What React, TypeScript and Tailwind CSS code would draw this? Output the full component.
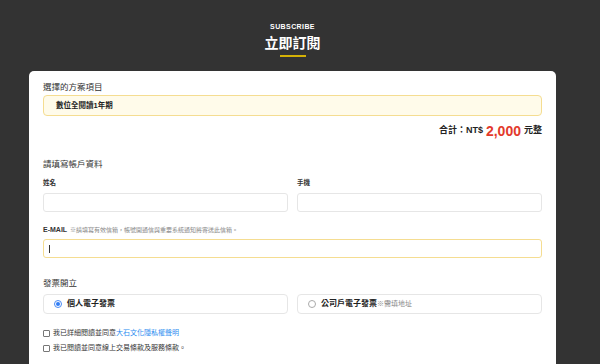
import React from "react";

const font = { fontFamily: '"Liberation Sans", "Noto Sans CJK TC", "Noto Sans", sans-serif' };

export default function App() {
  return (
    <div className="min-h-screen w-[600px] bg-[#333333]" style={font}>
      <div className="ml-[29px] w-[527px]">
        <div className="flex flex-col items-center pt-[22px]">
          <div className="h-[10px] leading-[10px] text-[7px] font-bold tracking-[0.4px] text-white">SUBSCRIBE</div>
          <div className="mt-[2px] h-[19px] leading-[19px] text-[14px] font-bold text-white">立即訂閱</div>
          <div className="mt-[2px] h-[2px] w-[26px] bg-[#d4b106]" />
        </div>
        <div className="mt-[14px] rounded-t-[5px] bg-white px-[14px] pt-[10px] pb-[20px] text-[#222]">
          <div className="h-[12px] leading-[12px] text-[8.5px] text-[#333]">選擇的方案項目</div>
          <div className="mt-[2px] flex h-[21px] items-center rounded-[4px] border border-[#f5dd91] bg-[#fffbea] pl-[12px] text-[7.5px] font-bold text-[#222]">
            數位全閱讀1年期
          </div>
          <div className="mt-[7px] flex h-[16px] items-center justify-end text-[9px] font-bold text-[#222]">
            <span>合計：NT$</span>
            <span className="ml-[3px] text-[14px] text-[#e3392b]">2,000</span>
            <span className="ml-[3px] text-[9px]">元整</span>
          </div>
          <div className="mt-[19px] h-[12px] leading-[12px] text-[8.5px] text-[#333]">請填寫帳戶資料</div>
          <div className="mt-[8px] grid grid-cols-2 gap-x-[9px]">
            <div className="h-[10px] leading-[10px] text-[6.5px] font-bold text-[#333]">姓名</div>
            <div className="h-[10px] leading-[10px] text-[6.5px] font-bold text-[#333]">手機</div>
            <div className="mt-[5px] h-[19px] rounded-[3px] border border-[#e6e6e6] bg-white" />
            <div className="mt-[5px] h-[19px] rounded-[3px] border border-[#e6e6e6] bg-white" />
          </div>
          <div className="mt-[13px] flex h-[10px] items-center">
            <span className="text-[7px] font-bold text-[#333]">E-MAIL</span>
            <span className="ml-[3px] text-[6px] text-[#888]">※請填寫有效信箱，帳號開通信與重要系統通知將寄送此信箱。</span>
          </div>
          <div className="mt-[4px] flex h-[19px] items-center rounded-[3px] border border-[#f5dd91] bg-white pl-[5px]">
            <div className="h-[8px] w-px bg-[#333]" />
          </div>
          <div className="mt-[19px] h-[12px] leading-[12px] text-[8.5px] text-[#333]">發票開立</div>
          <div className="mt-[5px] grid grid-cols-2 gap-x-[9px]">
            <div className="flex h-[20px] items-center rounded-[4px] border border-[#e6e6e6] pl-[10px]">
              <div className="flex h-[8px] w-[8px] items-center justify-center rounded-full border border-[#4a8af4] bg-white">
                <div className="h-[4px] w-[4px] rounded-full bg-[#2f7cf6]" />
              </div>
              <span className="ml-[5px] text-[8px] font-bold text-[#222]">個人電子發票</span>
            </div>
            <div className="flex h-[20px] items-center rounded-[4px] border border-[#e6e6e6] pl-[10px]">
              <div className="h-[8px] w-[8px] rounded-full border border-[#aaa] bg-white" />
              <span className="ml-[5px] text-[8px] font-bold text-[#222]">公司戶電子發票</span>
              <span className="text-[7px] text-[#888]">※需填地址</span>
            </div>
          </div>
          <div className="mt-[13px] flex h-[12px] items-center">
            <div className="h-[7px] w-[7px] rounded-[1px] border border-[#777] bg-white" />
            <span className="ml-[3px] text-[7px] text-[#333]">我已詳細閱讀並同意</span>
            <span className="text-[7px] text-[#2b8cf0]">大石文化隱私權聲明</span>
          </div>
          <div className="mt-[3px] flex h-[12px] items-center">
            <div className="h-[7px] w-[7px] rounded-[1px] border border-[#777] bg-white" />
            <span className="ml-[3px] text-[7px] text-[#333]">我已閱讀並同意線上交易條款及服務條款。</span>
          </div>
        </div>
      </div>
    </div>
  );
}
